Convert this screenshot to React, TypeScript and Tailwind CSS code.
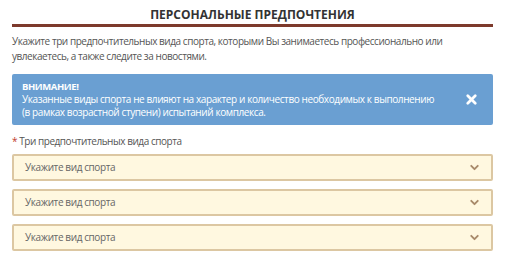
import { X, ChevronDown } from "lucide-react"

export default function App() {
  const selects = [1, 2, 3]

  return (
    <div className="w-[505px] h-[274px] bg-white px-3 pt-[6px] text-[#444] font-['Open_Sans',Arial,sans-serif]">
      {/* Header */}
      <h2 className="text-center text-[12px] font-bold uppercase text-[#333] leading-[18px]">
        Персональные предпочтения
      </h2>
      <div className="h-[3px] bg-[#7d3a2c]" />

      <p className="mt-[7px] text-[10px] tracking-[-0.45px] leading-[15px] text-[#555]">
        Укажите три предпочтительных вида спорта, которыми Вы занимаетесь профессионально или
        <br />
        увлекаетесь, а также следите за новостями.
      </p>

      {/* Alert */}
      <div className="mt-[10px] h-[51px] flex items-center justify-between rounded-[2px] bg-[#6a9fd2] pl-[10px] pr-[14px] text-white">
        <div className="text-[10px] tracking-[-0.4px] leading-[13px]">
          <div className="font-bold text-[9.5px]">ВНИМАНИЕ!</div>
          <div>Указанные виды спорта не влияют на характер и количество необходимых к выполнению</div>
          <div>(в рамках возрастной ступени) испытаний комплекса.</div>
        </div>
        <X className="h-[15px] w-[15px]" strokeWidth={4.5} />
      </div>

      {/* Field */}
      <div className="mt-[9px] text-[10px] tracking-[-0.45px] leading-[14px] text-[#555]">
        <span className="text-[#c0392b]">*</span> Три предпочтительных вида спорта
      </div>
      <div className="mt-[6px] flex flex-col gap-[8px]">
        {selects.map((i) => (
          <div
            key={i}
            className="h-[27px] flex items-center justify-between rounded-[2px] border-2 border-[#dcc7a2] bg-[#fff8e0] pl-[11px] pr-[10px] text-[10px] tracking-[-0.4px] text-[#666]"
          >
            <span>Укажите вид спорта</span>
            <ChevronDown className="h-[13px] w-[13px] text-[#a88a6a]" strokeWidth={3.5} />
          </div>
        ))}
      </div>
    </div>
  )
}
